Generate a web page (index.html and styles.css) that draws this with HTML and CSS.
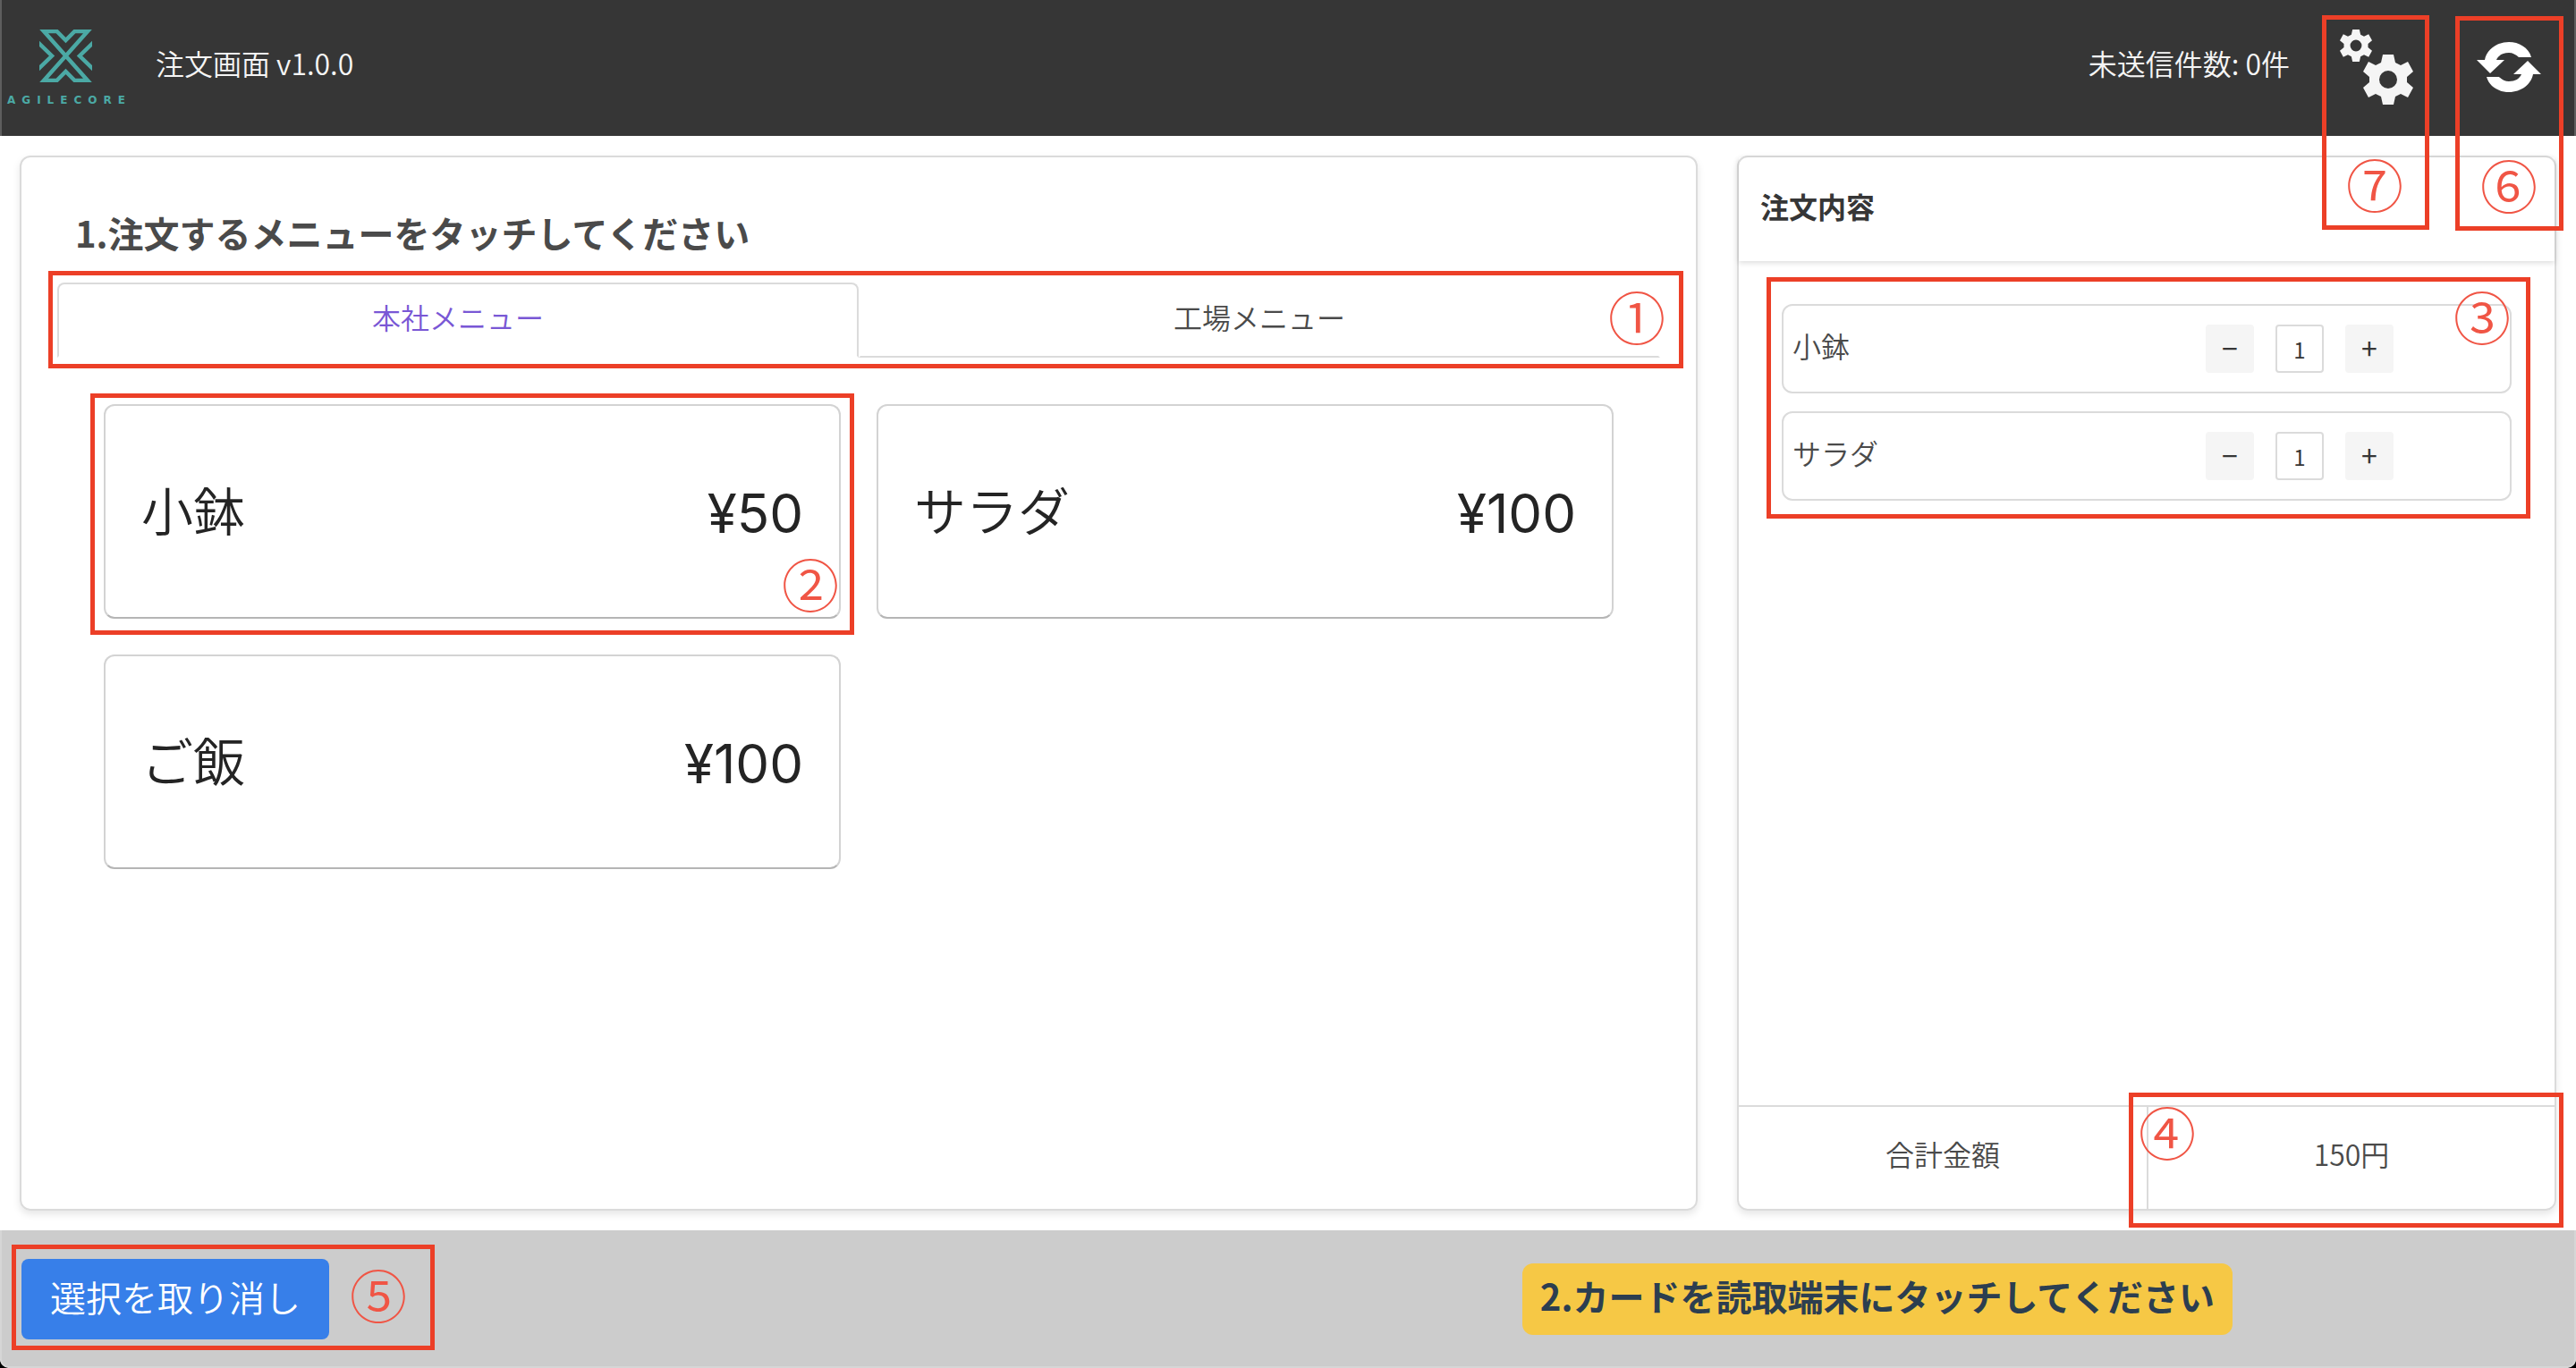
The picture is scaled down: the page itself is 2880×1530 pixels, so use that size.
FILE: index.html
```html
<!DOCTYPE html>
<html lang="ja">
<head>
<meta charset="utf-8">
<meta name="viewport" content="width=device-width, initial-scale=1">
<title>注文画面</title>
<link rel="stylesheet" href="styles.css">
</head>
<body>
<div class="app">
  <header class="topbar">
    <div class="brand">
      <svg class="brand-mark" viewBox="0 0 59 59" aria-hidden="true">
        <g fill="none" stroke="#4ba9a5" stroke-width="4.500">
          <path d="M5 2H19.500L29.500 12L39.500 2H54L5 57H19.500L29.500 47L39.500 57H54Z"/>
          <path d="M-2 14L14 29.500L-2 45M61 14L45 29.500L61 45"/>
        </g>
      </svg>
      <span class="brand-name">AGILECORE</span>
    </div>
    <h1 class="app-title">注文画面 v1.0.0</h1>
    <p class="unsent">未送信件数: 0件</p>
    <div class="annotated settings">
      <button class="icon-button" type="button" aria-label="設定">
        <svg width="82" height="84" viewBox="0 0 82 84" aria-hidden="true">
          <defs>
            <path id="gear" fill-rule="evenodd" d="M-6-28H6L8-19L14-16L22-20L28-9L21-3V3L28 9L22 20L14 16L8 19L6 28H-6L-8 19L-14 16L-22 20L-28 9L-21 3V-3L-28-9L-22-20L-14-16L-8-19ZM0-10A10 10 0 1 0 0 10A10 10 0 1 0 0-10Z"/>
          </defs>
          <use href="#gear" fill="#f5f5f5" transform="translate(18 18) scale(.643)"/>
          <use href="#gear" fill="#f5f5f5" transform="translate(54 56)"/>
        </svg>
      </button>
      <span class="callout callout-settings"><span class="callout-number">⑦</span></span>
    </div>
    <div class="annotated">
      <button class="icon-button" type="button" aria-label="更新">
        <svg width="70" height="56" viewBox="0 0 70 56" aria-hidden="true">
          <g fill="#fff">
            <path id="arrow" d="M8 20C10 9 21 0 35 0C46 0 57 6 60 17H46C43 14 39 12 35 12C28 12 23 15 21 20H30L14 35L-1 20Z"/>
            <use href="#arrow" transform="rotate(180 35 28)"/>
          </g>
        </svg>
      </button>
      <span class="callout callout-refresh"><span class="callout-number">⑥</span></span>
    </div>
  </header>

  <main class="columns">
    <section class="panel menu-panel">
      <h2 class="menu-heading">1.注文するメニューをタッチしてください</h2>
      <div class="tabs annotated" role="tablist">
        <button class="tab tab-active" type="button" role="tab" aria-selected="true">本社メニュー</button>
        <button class="tab" type="button" role="tab" aria-selected="false">工場メニュー</button>
        <span class="callout callout-tabs"><span class="callout-number">①</span></span>
      </div>
      <div class="products">
        <div class="annotated">
          <button class="product" type="button"><span class="product-name">小鉢</span><span class="price">¥50</span></button>
          <span class="callout callout-product"><span class="callout-number">②</span></span>
        </div>
        <button class="product" type="button"><span class="product-name">サラダ</span><span class="price">¥100</span></button>
        <button class="product" type="button"><span class="product-name">ご飯</span><span class="price">¥100</span></button>
      </div>
    </section>

    <section class="panel order-panel">
      <h2 class="order-heading">注文内容</h2>
      <div class="order-body">
        <div class="order-list annotated">
          <div class="order-item">
            <label class="item-name" for="qty-kobachi">小鉢</label>
            <button class="step" type="button" aria-label="小鉢を減らす">−</button>
            <input class="quantity" id="qty-kobachi" type="text" inputmode="numeric" value="1">
            <button class="step" type="button" aria-label="小鉢を増やす">+</button>
          </div>
          <div class="order-item">
            <label class="item-name" for="qty-salad">サラダ</label>
            <button class="step" type="button" aria-label="サラダを減らす">−</button>
            <input class="quantity" id="qty-salad" type="text" inputmode="numeric" value="1">
            <button class="step" type="button" aria-label="サラダを増やす">+</button>
          </div>
          <span class="callout callout-list"><span class="callout-number">③</span></span>
        </div>
      </div>
      <div class="total">
        <div class="total-cell">合計金額</div>
        <div class="total-cell total-value annotated">150円
          <span class="callout callout-total"><span class="callout-number">④</span></span>
        </div>
      </div>
    </section>
  </main>

  <footer class="bottombar">
    <div class="annotated">
      <button class="clear" type="button">選択を取り消し</button>
      <span class="callout callout-clear"><span class="callout-number">⑤</span></span>
    </div>
    <p class="notice">2.カードを読取端末にタッチしてください</p>
  </footer>
</div>
</body>
</html>
```

FILE: styles.css
```css
* {
  box-sizing: border-box;
}

html {
  background: #000;
}

body {
  margin: 0;
  color: #4a4a4a;
  font-family: "Noto Sans CJK JP", sans-serif;
  font-size: 32px;
  font-weight: 350;
  line-height: 48px;
}

h1,
h2,
p {
  margin: 0;
}

button,
input {
  margin: 0;
  padding: 0;
  border: 0;
  background: none;
  color: inherit;
  font: inherit;
}

button {
  cursor: pointer;
}

.app {
  display: grid;
  grid-template-rows: auto 1fr auto;
  min-height: 100vh;
  overflow: hidden;
  border-radius: 0 0 10px 10px;
  background: #fff;
}

/* Top bar */
.topbar {
  display: flex;
  align-items: center;
  min-height: 152px;
  padding: 0 38px 2px 6px;
  border: solid #5e5e5e;
  border-width: 0 2px;
  background: #363636;
  color: #f5f5f5;
}

.brand {
  display: flex;
  flex-direction: column;
  align-items: center;
  gap: 14px;
}

.brand-mark {
  width: 59px;
  height: 59px;
}

.brand-name {
  margin-right: -7px;
  color: #4ba9a5;
  font-family: "DejaVu Sans", sans-serif;
  font-size: 12px;
  font-weight: 700;
  line-height: 12px;
  letter-spacing: 7px;
}

.app-title,
.unsent {
  padding-bottom: 10px;
  font-size: 32px;
  font-weight: 350;
}

.app-title {
  margin-left: 34px;
}

.unsent {
  margin-left: auto;
}

.settings {
  margin: 0 72px 0 56px;
}

.icon-button {
  display: block;
}

.icon-button svg {
  display: block;
  overflow: visible;
}

/* Panels */
.columns {
  display: grid;
  grid-template-columns: 2fr 1fr;
}

.panel {
  display: flex;
  flex-direction: column;
  margin: 22px;
  border: 2px solid #dbdbdb;
  border-radius: 12px;
  box-shadow: 0 4px 8px rgba(0, 0, 0, .1);
}

.menu-panel {
  padding: 60px 40px 40px;
}

.menu-heading {
  padding: 0 20px;
  font-size: 40px;
  font-weight: 700;
  line-height: 48px;
}

.tabs {
  display: grid;
  grid-template-columns: 1fr 1fr;
  margin-top: 32px;
}

.tab {
  height: 84px;
  padding-bottom: 8px;
  border: 2px solid transparent;
  border-bottom-color: #dbdbdb;
}

.tab-active {
  border-color: #dbdbdb;
  border-bottom-color: transparent;
  border-radius: 8px 8px 0 0;
  color: #7957d5;
}

.products {
  display: grid;
  grid-template-columns: 1fr 1fr;
  gap: 40px;
  padding: 52px;
}

.product {
  display: flex;
  align-items: center;
  justify-content: space-between;
  width: 100%;
  height: 240px;
  padding: 0 40px;
  border: 2px solid #d3d3d3;
  border-bottom-color: #b5b5b5;
  border-radius: 12px;
  color: #242424;
  font-size: 58px;
  line-height: 72px;
}

.product-name {
  padding-bottom: 6px;
}

.price {
  padding-top: 4px;
  font-family: Inter, sans-serif;
  font-size: 60px;
  font-weight: 400;
}

/* Order */
.order-heading {
  padding: 30px 24px 38px;
  box-shadow: 0 2px 6px rgba(0, 0, 0, .14);
  color: #363636;
  font-size: 32px;
  font-weight: 700;
}

.order-body {
  flex: 1;
  padding: 48px;
}

.order-list {
  display: grid;
  gap: 20px;
}

.order-item {
  display: flex;
  align-items: center;
  gap: 24px;
  height: 100px;
  padding: 0 130px 0 10px;
  border: 2px solid #dbdbdb;
  border-radius: 12px;
}

.item-name {
  flex: 1;
  padding-bottom: 8px;
}

.step,
.quantity {
  width: 54px;
  height: 54px;
  border-radius: 4px;
  color: #363636;
  font-size: 24px;
  font-weight: 400;
  line-height: 48px;
  text-align: center;
}

.step {
  padding-bottom: 4px;
  background: #f5f5f5;
  font-size: 32px;
}

.quantity {
  border: 2px solid #dbdbdb;
}

.total {
  display: grid;
  grid-template-columns: 1fr 1fr;
  border-top: 2px solid #dbdbdb;
}

.total-cell {
  padding: 28px 0 38px;
  text-align: center;
}

.total-value {
  border-left: 2px solid #dbdbdb;
}

/* Bottom bar */
.bottombar {
  display: flex;
  align-items: center;
  justify-content: space-between;
  min-height: 154px;
  padding: 2px 382px 0 22px;
  border: 2px solid #d6d6d6;
  border-top: 0;
  border-radius: 0 0 10px 10px;
  background: #ccc;
}

.clear {
  display: block;
  height: 90px;
  padding: 0 32px 6px;
  border-radius: 8px;
  background: #377fe9;
  color: #fff;
  font-size: 40px;
}

.notice {
  padding: 12px 20px 20px;
  border-radius: 12px;
  background: #f6c845;
  color: #2c3e50;
  font-size: 40px;
  font-weight: 700;
}

/* Numbered callouts laid over the controls they explain */
.annotated {
  position: relative;
}

.callout {
  position: absolute;
  z-index: 1;
  border: 5px solid #ec3f27;
  pointer-events: none;
}

.callout-number {
  position: absolute;
  color: #f05545;
  font-size: 64px;
  font-weight: 350;
  line-height: 56px;
}

.callout-tabs {
  inset: -13px -26px -12px -10px;
}

.callout-tabs .callout-number {
  top: 16px;
  right: 15px;
}

.callout-product {
  inset: -12px -15px -18px -15px;
}

.callout-product .callout-number {
  right: 12px;
  bottom: 26px;
}

.callout-list {
  inset: -30px -21px -20px -17px;
}

.callout-list .callout-number {
  top: 9px;
  right: 17px;
}

.callout-total {
  inset: -16px -10px -21px -22px;
}

.callout-total .callout-number {
  top: 9px;
  left: 6px;
}

.callout-clear {
  inset: -16px -118px -12px -11px;
}

.callout-clear .callout-number {
  top: 21px;
  right: 26px;
}

.callout-settings {
  inset: -16px -18px -140px -20px;
}

.callout-refresh {
  inset: -29px -26px -155px -25px;
}

.callout-settings .callout-number,
.callout-refresh .callout-number {
  right: 24px;
  bottom: 20px;
}
```
